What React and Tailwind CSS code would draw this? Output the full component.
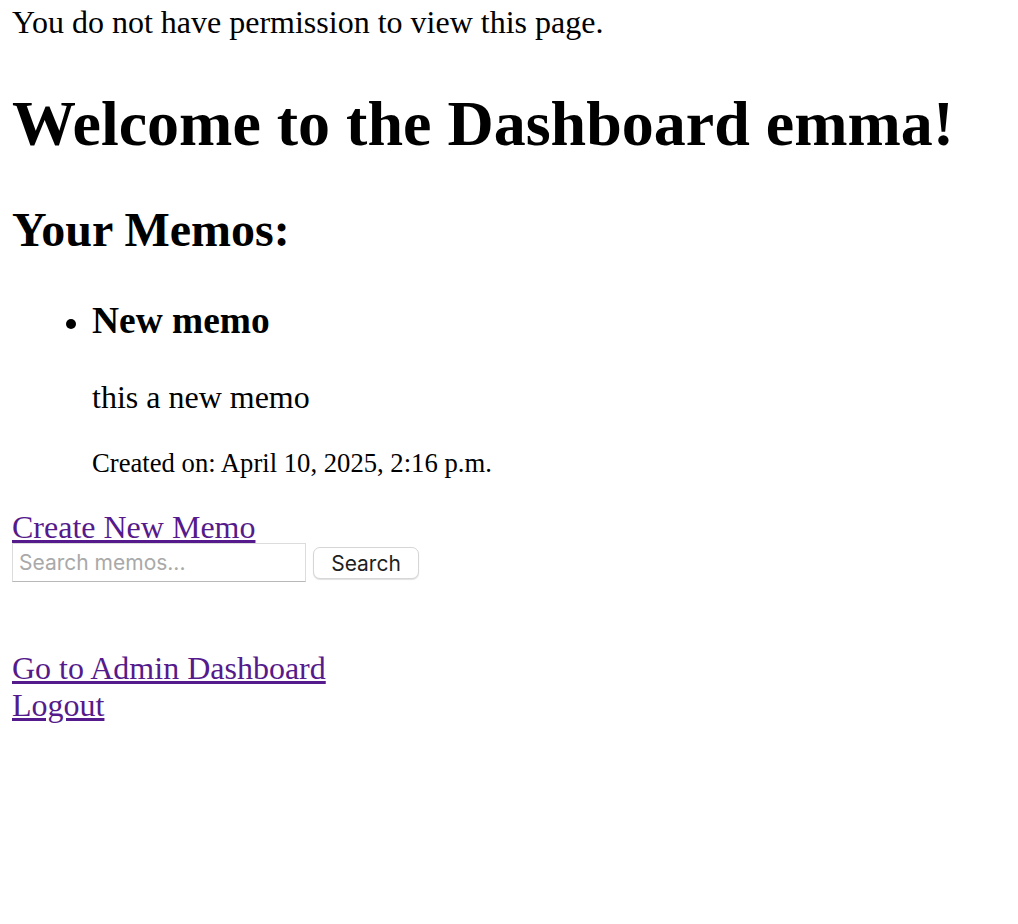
import React from 'react';

const serif = { fontFamily: '"Liberation Serif", "Times New Roman", serif' };

const memos = [
  {
    id: 1,
    title: 'New memo',
    body: 'this a new memo',
    created: 'April 10, 2025, 2:16 p.m.',
  },
];

const MemoItem = ({ memo }) => (
  <li className="list-disc">
    <h3 className="mt-0 text-[37.44px] leading-[43px] font-bold">{memo.title}</h3>
    <p className="mt-[37px] text-[32px] leading-[37px]">{memo.body}</p>
    <p className="mt-[32px] text-[26.67px] leading-[31px]">Created on: {memo.created}</p>
  </li>
);

const App = () => {
  return (
    <div
      className="min-h-screen bg-white text-black px-[12px] pt-[4px] font-['Liberation_Serif',serif]"
      style={serif}
    >
      <div className="text-[32px] leading-[37px]">You do not have permission to view this page.</div>

      <h1 className="mt-[46px] text-[64px] leading-[74px] font-bold">Welcome to the Dashboard emma!</h1>

      <h2 className="mt-[41px] text-[48px] leading-[55px] font-bold">Your Memos:</h2>

      <ul className="mt-[42px] pl-[80px] list-disc text-[32px] leading-[37px]">
        {memos.map((memo) => (
          <MemoItem key={memo.id} memo={memo} />
        ))}
      </ul>

      <div className="mt-[30px] text-[32px] leading-[37px]">
        <a href="#" className="text-[#551a8b] underline">Create New Memo</a>
      </div>

      {/* Search form */}
      <form className="-mt-[3px] flex items-center gap-[7px] font-['Inter',sans-serif]" onSubmit={(e) => e.preventDefault()}>
        <input
          type="text"
          placeholder="Search memos..."
          className="h-[39px] w-[294px] border border-[#dcdcdc] border-b-[#b8b8b8] bg-white px-[6px] text-[21px] text-black placeholder:text-[#a9a9a9] outline-none"
        />
        <button
          type="submit"
          className="h-[32px] w-[106px] rounded-[7px] border border-[#d6d6d6] bg-white text-[21px] text-[#1f1f1f] shadow-[0_1px_1px_rgba(0,0,0,0.12)]"
        >
          Search
        </button>
      </form>

      <div className="mt-[68px] text-[32px] leading-[37px]">
        <a href="#" className="text-[#551a8b] underline">Go to Admin Dashboard</a>
      </div>
      <div className="text-[32px] leading-[37px]">
        <a href="#" className="text-[#551a8b] underline">Logout</a>
      </div>
    </div>
  );
};

export default App;
